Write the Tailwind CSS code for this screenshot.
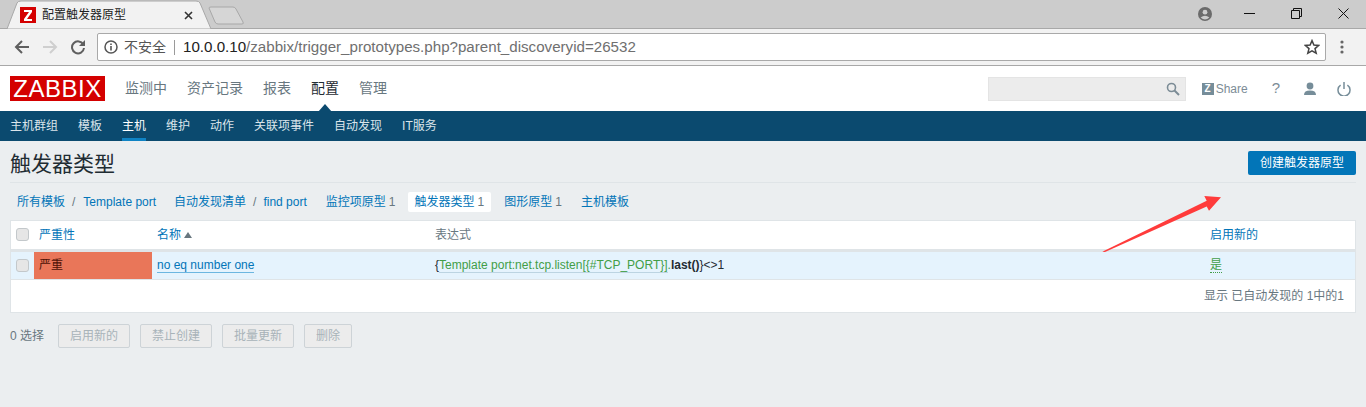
<!DOCTYPE html>
<html lang="zh-CN">
<head>
<meta charset="UTF-8">
<title>配置触发器原型</title>
<script src="https://cdn.jsdelivr.net/npm/@tailwindcss/browser@4"></script>
</head>
<body class="relative h-[407px] overflow-hidden bg-[#ebeef0] text-[12px] text-[#1f2c33] font-['Liberation_Sans','Noto_Sans_CJK_SC',sans-serif]">

    <!-- browser tab strip -->
    <div class="relative h-[29px] bg-[#cccccc] border-b border-[#a8a8a8] flex items-start">
        <svg class="absolute left-0 top-0" width="250" height="29" viewBox="0 0 250 29">
            <path d="M7 29 L17 3 Q18 1 21 1 L196 1 Q199 1 200 3 L211 29 Z" fill="#f2f2f2" stroke="#a8a8a8"/>
            <path d="M209 8 Q209 7 211 7 L233 7 Q235 7 236 9 L243 22 Q244 24 242 24 L218 24 Q216 24 215 22 Z" fill="#d6d6d6" stroke="#a8a8a8"/>
            <rect x="20" y="7" width="16" height="16" fill="#d40000"/>
            <path d="M24 10 H32 V12 L27 19 H32 V21 H24 V19 L29 12 H24 Z" fill="#fff"/>
            <path d="M185 12 L192 19 M192 12 L185 19" stroke="#333" stroke-width="1.6"/>
        </svg>
        <span class="absolute left-[42px] top-[7px] text-[12px] leading-[17px] text-[#222]">配置触发器原型</span>
        <div class="ml-auto flex items-center h-[27px] text-[#333]">
            <svg class="mr-[32px]" width="14" height="14" viewBox="0 0 14 14"><circle cx="7" cy="7" r="7" fill="#6b6b6b"/><circle cx="7" cy="5.2" r="2.4" fill="#ccc"/><path d="M2.6 10.6 Q7 6.8 11.4 10.6 Q7 14.4 2.6 10.6Z" fill="#ccc"/></svg>
            <svg class="mr-[36px]" width="11" height="11" viewBox="0 0 11 11"><path d="M0 5.5 H11" stroke="#111" stroke-width="1"/></svg>
            <svg class="mr-[36px]" width="11" height="11" viewBox="0 0 11 11"><path d="M.5 2.5 H8.5 V10.5 H.5 Z M2.5 2.5 V.5 H10.5 V8.5 H8.5" fill="none" stroke="#111"/></svg>
            <svg class="mr-[17px]" width="11" height="11" viewBox="0 0 11 11"><path d="M.5 .5 L10.5 10.5 M10.5 .5 L.5 10.5" stroke="#111"/></svg>
        </div>
    </div>

    <!-- browser toolbar -->
    <div class="h-[37px] bg-[#f2f2f2] border-b border-[#a8a8a8] flex items-center">
        <svg class="ml-[14px]" width="16" height="16" viewBox="0 0 16 16"><path d="M15 8 H2.5 M8 2 L2 8 L8 14" fill="none" stroke="#5f5f5f" stroke-width="2"/></svg>
        <svg class="ml-[12px]" width="16" height="16" viewBox="0 0 16 16"><path d="M1 8 H13.5 M8 2 L14 8 L8 14" fill="none" stroke="#cfcfcf" stroke-width="2"/></svg>
        <svg class="ml-[12px]" width="16" height="16" viewBox="0 0 16 16"><path d="M13.3 5.5 A6 6 0 1 0 14 9" fill="none" stroke="#5f5f5f" stroke-width="2"/><path d="M15 1 V7 H9 Z" fill="#5f5f5f"/></svg>
        <div class="ml-[11px] w-[1229px] h-[28px] bg-white border border-[#a9a9a9] rounded-[2px] flex items-center">
            <svg class="ml-[6px]" width="14" height="14" viewBox="0 0 14 14"><circle cx="7" cy="7" r="6" fill="none" stroke="#555" stroke-width="1.5"/><path d="M7 6 V10.5 M7 3.4 V5" stroke="#555" stroke-width="1.6"/></svg>
            <span class="ml-[6px] text-[14px] text-[#555]">不安全</span>
            <span class="ml-[8px] w-px h-[15px] bg-[#9a9a9a]"></span>
            <span class="ml-[8px] text-[15.13px] text-[#222]">10.0.0.10<span class="text-[#6f6f6f]">/zabbix/trigger_prototypes.php?parent_discoveryid=26532</span></span>
            <svg class="ml-auto mr-[5px]" width="16" height="16" viewBox="0 0 16 16"><path d="M8 1.6 L9.9 6 L14.7 6.4 L11 9.6 L12.2 14.2 L8 11.8 L3.8 14.2 L5 9.6 L1.3 6.4 L6.1 6 Z" fill="none" stroke="#444" stroke-width="1.5"/></svg>
        </div>
        <svg class="ml-[14px]" width="4" height="14" viewBox="0 0 4 14"><circle cx="2" cy="2" r="1.6" fill="#666"/><circle cx="2" cy="7" r="1.6" fill="#666"/><circle cx="2" cy="12" r="1.6" fill="#666"/></svg>
    </div>

    <!-- zabbix top menu -->
    <div class="h-[45px] bg-white flex items-center pl-[10px] pr-[15px]">
        <div class="w-[95px] h-[25px] bg-[#d40000] text-white text-[24px] leading-[25px] text-center tracking-[0.5px]">ZABBIX</div>
        <nav class="ml-[20px] flex gap-[20px] text-[14px] text-[#68777f]">
            <span>监测中</span>
            <span>资产记录</span>
            <span>报表</span>
            <span class="relative text-[#1f2c33]">配置<span class="absolute left-[7px] top-[26px] w-0 h-0 border-x-[7px] border-x-transparent border-b-[8px] border-b-[#0b4a6f]"></span></span>
            <span>管理</span>
        </nav>
        <div class="ml-auto w-[198px] h-[24px] bg-[#ececec] border border-[#e4e4e4] flex items-center justify-end pr-[5px]">
            <svg width="14" height="14" viewBox="0 0 14 14"><circle cx="5.5" cy="5.5" r="4" fill="none" stroke="#7c8c96" stroke-width="1.6"/><path d="M8.5 8.5 L13 13" stroke="#7c8c96" stroke-width="2"/></svg>
        </div>
        <div class="ml-[16px] flex items-center text-[#7c8c96]">
            <span class="w-[12px] h-[12px] bg-[#768d99] text-white text-[10px] leading-[12px] font-bold text-center">Z</span>
            <span class="ml-[2px] text-[12px]">Share</span>
        </div>
        <span class="ml-[24px] text-[15px] text-[#7c8c96]">?</span>
        <svg class="ml-[23px]" width="14" height="14" viewBox="0 0 14 14"><circle cx="7" cy="4" r="3.4" fill="#768d99"/><path d="M1 13 Q1 8.6 7 8.6 Q13 8.6 13 13 Z" fill="#768d99"/></svg>
        <svg class="ml-[20px]" width="14" height="14" viewBox="0 0 14 14"><path d="M3.6 3.2 A6 6 0 1 0 10.4 3.2" fill="none" stroke="#768d99" stroke-width="1.5"/><path d="M7 0 V7" stroke="#768d99" stroke-width="1.5"/></svg>
    </div>

    <!-- sub menu -->
    <div class="h-[30px] bg-[#0b4a6f] flex gap-[20px] pl-[10px] text-[12px] text-[#dbe5eb]">
        <span class="leading-[30px]">主机群组</span>
        <span class="leading-[30px]">模板</span>
        <span class="relative leading-[30px] text-white">主机<span class="absolute left-0 right-0 bottom-0 h-[3px] bg-[#0f83c4]"></span></span>
        <span class="leading-[30px]">维护</span>
        <span class="leading-[30px]">动作</span>
        <span class="leading-[30px]">关联项事件</span>
        <span class="leading-[30px]">自动发现</span>
        <span class="leading-[30px]">IT服务</span>
    </div>

    <main class="px-[10px]">
        <div class="h-[42px] border-b border-[#dfe4e7] flex items-start justify-between">
            <h1 class="mt-[10px] text-[21px] leading-[26px] font-normal text-[#1f2c33]">触发器类型</h1>
            <button class="mt-[10px] w-[108px] h-[24px] bg-[#0275b8] rounded-[2px] text-white text-[12px]">创建触发器原型</button>
        </div>

        <!-- breadcrumbs -->
        <div class="h-[37px] flex items-center pl-[1px] text-[#0275b8]">
            <span class="ml-[6px]">所有模板</span><span class="ml-[7px] mr-[8px] text-[#68777f]">/</span><span>Template port</span>
            <span class="ml-[18px]">自动发现清单</span><span class="mx-[7px] text-[#68777f]">/</span><span>find port</span>
            <span class="ml-[19px]">监控项原型</span><span class="ml-[3px] text-[#68777f]">1</span>
            <span class="ml-[13px] h-[20px] leading-[20px] pl-[6px] pr-[7px] bg-white rounded-[2px]">触发器类型<span class="ml-[3px] text-[#68777f]">1</span></span>
            <span class="ml-[13px]">图形原型</span><span class="ml-[3px] text-[#68777f]">1</span>
            <span class="ml-[19px]">主机模板</span>
        </div>

        <!-- table -->
        <div class="bg-white border border-[#dfe4e7]">
            <table class="w-full table-fixed border-collapse">
                <colgroup>
                    <col class="w-[23px]"><col class="w-[118px]"><col class="w-[278px]"><col><col class="w-[150px]">
                </colgroup>
                <thead>
                    <tr class="h-[29px] border-b-[3px] border-[#dfe4e7]">
                        <th class="p-0 pl-[5px] font-normal text-left"><span class="block w-[13px] h-[13px] bg-[#e6e6e6] border border-[#c3c8cb] rounded-[3px]"></span></th>
                        <th class="p-0 pl-[5px] font-normal text-left text-[#0275b8]">严重性</th>
                        <th class="p-0 pl-[5px] font-normal text-left text-[#0275b8]">名称<span class="inline-block ml-[3px] mb-[1px] w-0 h-0 border-x-[4px] border-x-transparent border-b-[6px] border-b-[#68777f]"></span></th>
                        <th class="p-0 pl-[5px] font-normal text-left text-[#68777f]">表达式</th>
                        <th class="p-0 pl-[5px] font-normal text-left text-[#0275b8]">启用新的</th>
                    </tr>
                </thead>
                <tbody>
                    <tr class="h-[29px] bg-[#e5f3fd] border-b border-[#dfe4e7]">
                        <td class="p-0 pl-[5px]"><span class="block w-[13px] h-[13px] bg-[#e6e6e6] border border-[#c3c8cb] rounded-[3px]"></span></td>
                        <td class="p-0 pl-[5px] bg-[#e97659] text-[#4d1206]">严重</td>
                        <td class="p-0 pl-[5px]"><span class="text-[#0275b8] border-b border-[#6cb6e0]">no eq number one</span></td>
                        <td class="p-0 pl-[5px] text-[#1f2c33]">{<span class="text-[#429e47] border-b border-[#bcd4e2]">Template port:net.tcp.listen[{#TCP_PORT}]</span><span class="text-[#429e47]">.</span><b>last()</b>}&lt;&gt;1</td>
                        <td class="p-0 pl-[5px]"><span class="text-[#429e47] border-b border-dotted border-[#429e47]">是</span></td>
                    </tr>
                    <tr class="h-[33px]">
                        <td colspan="5" class="p-0 pr-[11px] text-right text-[#68777f]">显示 已自动发现的 1中的1</td>
                    </tr>
                </tbody>
            </table>
        </div>

        <!-- bulk actions -->
        <div class="mt-[11px] flex items-center gap-[10px] text-[#a8b3b9]">
            <span class="text-[#68777f] mr-[4px]">0 选择</span>
            <button class="w-[72px] h-[24px] bg-[#ececec] border border-[#cdd3d7] rounded-[2px]">启用新的</button>
            <button class="w-[72px] h-[24px] bg-[#ececec] border border-[#cdd3d7] rounded-[2px]">禁止创建</button>
            <button class="w-[72px] h-[24px] bg-[#ececec] border border-[#cdd3d7] rounded-[2px]">批量更新</button>
            <button class="w-[48px] h-[24px] bg-[#ececec] border border-[#cdd3d7] rounded-[2px]">删除</button>
        </div>
    </main>

    <!-- red annotation arrow lying over the page -->
    <svg class="absolute left-[1100px] top-[195px]" width="124" height="58" viewBox="0 0 124 58">
        <path d="M2.3 56.7 L106.7 5.8 L104.3 1 L121 2.3 L109 15.7 L106.7 11.5 L5 56.9 Z" fill="#ff3b3b"/>
    </svg>
</body>
</html>
